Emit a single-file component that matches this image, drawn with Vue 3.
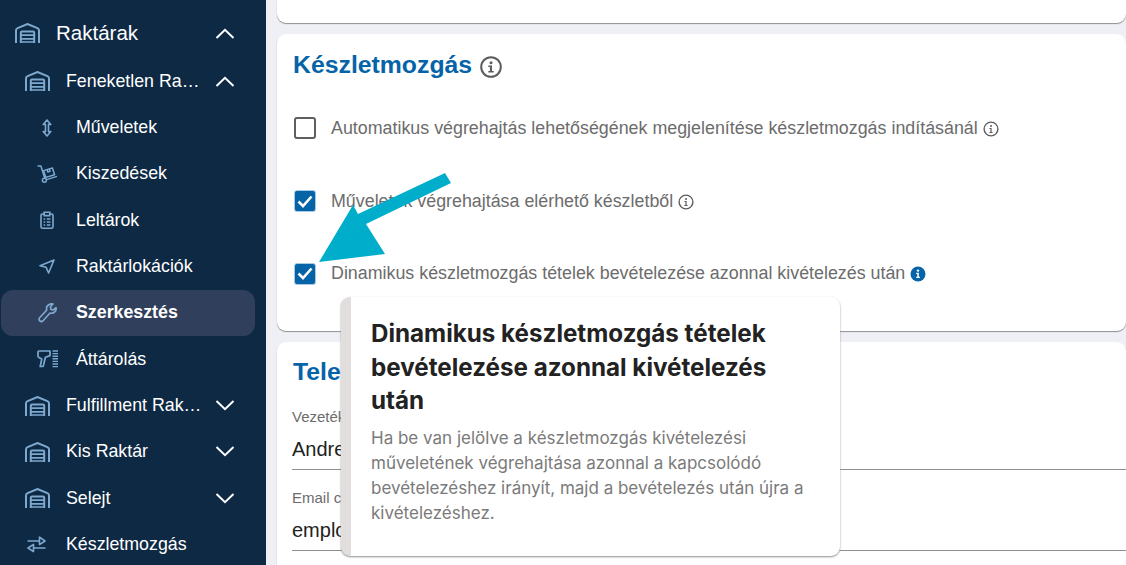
<script setup>
const navItems = [
  { label: 'Raktárak', level: 0, icon: 'warehouse', chevron: 'up' },
  { label: 'Feneketlen Raktár', level: 1, icon: 'warehouse', chevron: 'up' },
  { label: 'Műveletek', level: 2, icon: 'updown' },
  { label: 'Kiszedések', level: 2, icon: 'cart' },
  { label: 'Leltárok', level: 2, icon: 'clipboard' },
  { label: 'Raktárlokációk', level: 2, icon: 'nav' },
  { label: 'Szerkesztés', level: 2, icon: 'wrench', active: true },
  { label: 'Áttárolás', level: 2, icon: 'scanner' },
  { label: 'Fulfillment Raktár', level: 1, icon: 'warehouse', chevron: 'down' },
  { label: 'Kis Raktár', level: 1, icon: 'warehouse', chevron: 'down' },
  { label: 'Selejt', level: 1, icon: 'warehouse', chevron: 'down' },
  { label: 'Készletmozgás', level: 1, icon: 'transfer' }
]

const options = [
  { label: 'Automatikus végrehajtás lehetőségének megjelenítése készletmozgás indításánál', checked: false },
  { label: 'Műveletek végrehajtása elérhető készletből', checked: true },
  { label: 'Dinamikus készletmozgás tételek bevételezése azonnal kivételezés után', checked: true, solid: true }
]

const fields = [
  { label: 'Vezetéknév', value: 'Andrea' },
  { label: 'Email cím', value: 'employee@example.com' }
]
</script>

<template>
  <div class="page">
    <aside class="sidebar">
      <div
        v-for="item in navItems"
        :key="item.label"
        class="nav-row"
        :class="['lvl' + item.level, { active: item.active }]"
      >
        <span class="nav-icon">
          <svg v-if="item.icon === 'warehouse'" width="25" height="20" viewBox="0 0 25 20" fill="none" stroke="#7ea9cf" stroke-width="2">
            <path d="M1 20V7.6C1 6.4 1.5 5.7 2.6 5.2L12.5 1l9.9 4.2c1.1.5 1.6 1.2 1.6 2.4V20" />
            <path d="M5.8 20V9.8c0-.8.4-1.2 1.2-1.2h11c.8 0 1.2.4 1.2 1.2V20" />
            <path d="M5.8 12.2h13.4M5.8 15.8h13.4M5.8 19h13.4" stroke-width="1.7" />
          </svg>
          <svg v-else-if="item.icon === 'updown'" width="10" height="18" viewBox="0 0 10 18" fill="none" stroke="#7ea9cf" stroke-width="1.6" stroke-linejoin="round">
            <path d="M5 1 1.2 5.4h2.3v7.2H1.2L5 17l3.8-4.4H6.5V5.4h2.3z" />
          </svg>
          <svg v-else-if="item.icon === 'cart'" width="21" height="18" viewBox="0 0 21 18" fill="none" stroke="#7ea9cf" stroke-width="1.5" stroke-linejoin="round">
            <path d="M.5 1h3.4l3.8 12" />
            <path d="M6.6 5.6 15.4 3l2.2 6.8-8.8 2.6z" />
            <path d="M10 4.6l.8 2.4 2.2-.7-.8-2.4" />
            <path d="M9.5 14.6 20 11.4" />
            <circle cx="7.4" cy="15.2" r="2" />
          </svg>
          <svg v-else-if="item.icon === 'clipboard'" width="14" height="18" viewBox="0 0 14 18" fill="none" stroke="#7ea9cf" stroke-width="1.6">
            <path d="M4 3H2.5C1.6 3 1 3.6 1 4.5v11.2c0 .9.6 1.5 1.5 1.5h9c.9 0 1.5-.6 1.5-1.5V4.5C13 3.6 12.4 3 11.5 3H10" />
            <path d="M4.2 1.2h5.6v3.4H4.2z" />
            <path d="M3.6 8h1.6M6.8 8h3.6M3.6 11h1.6M6.8 11h3.6M3.6 14h1.6M6.8 14h3.6" stroke-width="1.3" />
          </svg>
          <svg v-else-if="item.icon === 'nav'" width="16" height="15" viewBox="0 0 16 15" fill="none" stroke="#7ea9cf" stroke-width="1.6" stroke-linejoin="round">
            <path d="M15 1 1 6.8l6 1.4L9.6 14z" />
          </svg>
          <svg v-else-if="item.icon === 'wrench'" width="19" height="20" viewBox="0 0 19 20" fill="none" stroke="#7ea9cf" stroke-width="1.7" stroke-linejoin="round">
            <path d="M18 4.6c.4 2.4-.6 4.4-2.8 5.3-1.3.5-2.3.4-3.2.1l-6.9 7.7c-1 1-2.4 1-3.3.1-1-.9-1-2.3 0-3.3l7-7.5c-.5-1.3-.4-2.5.3-3.8C11.1 1.1 13.2.4 15 1l-2.6 3 .5 2.4 2.4.6z" />
          </svg>
          <svg v-else-if="item.icon === 'scanner'" width="21" height="18" viewBox="0 0 21 18" fill="none" stroke="#7ea9cf" stroke-width="1.7" stroke-linejoin="round">
            <path d="M2 1h11v4.6L8.4 7.2 6.4 15.6c-.1.6-.5.9-1 .9H3.2L4.8 9 2 7.6c-.7-.4-1-.9-1-1.6V2c0-.6.4-1 1-1z" />
            <path d="M15.5 1H21M15.5 3.600H21M15.5 6.2H21M15.5 8.8H21M15.5 11.4H21M15.5 14H21M15.5 16.6H21" stroke-width="1.4" />
          </svg>
          <svg v-else-if="item.icon === 'transfer'" class="transfer-icon" width="19" height="17" viewBox="0 0 19 17" fill="none" stroke="#7ea9cf" stroke-width="1.6" stroke-linejoin="round">
            <path d="M.5 5h12M12.5 1.2v7.4L18 5zM18.5 12h-12M6.5 8.4v7.2L1 12z" />
          </svg>
        </span>
        <span class="nav-label">{{ item.label }}</span>
        <svg v-if="item.chevron" class="chevron" width="20" height="11" viewBox="0 0 20 11" fill="none" stroke="#fff" stroke-width="2">
          <path v-if="item.chevron === 'up'" d="M1.5 10 10 1.8 18.5 10" />
          <path v-else d="M1.5 1 10 9.2 18.5 1" />
        </svg>
      </div>
    </aside>

    <main class="content">
      <section class="card card-top"></section>

      <section class="card card-stock">
        <h2 class="title">
          Készletmozgás
          <svg class="title-info" width="22" height="22" viewBox="0 0 22 22" fill="none">
            <circle cx="11" cy="11" r="9.8" stroke="#5c5c5c" stroke-width="2" />
            <circle cx="11" cy="6.7" r="1.5" fill="#5c5c5c" />
            <path d="M8.3 9.4H12V15h1.700v1.600H8.300V15h1.600v-4H8.300z" fill="#5c5c5c" />
          </svg>
        </h2>
        <div class="options">
          <div v-for="opt in options" :key="opt.label" class="option">
            <span class="box" :class="{ checked: opt.checked }">
              <svg v-if="opt.checked" width="16" height="13" viewBox="0 0 16 13" fill="none" stroke="#fff" stroke-width="2.6">
                <path d="M1.5 6.5 6 11l8.500-9.500" />
              </svg>
            </span>
            <span class="opt-label">{{ opt.label }}</span>
            <svg class="opt-info" width="16" height="16" viewBox="0 0 16 16" fill="none">
              <template v-if="opt.solid">
                <circle cx="8" cy="8" r="7.5" fill="#0563a8" />
                <circle cx="8" cy="4.6" r="1.2" fill="#fff" />
                <path d="M6.2 6.8h2.600v4h1.100v1.300H6.200v-1.300h1.100V8.100H6.200z" fill="#fff" />
              </template>
              <template v-else>
                <circle cx="8" cy="8" r="6.9" stroke="#5c5c5c" stroke-width="1.4" />
                <circle cx="8" cy="4.9" r="1" fill="#5c5c5c" />
                <path d="M6.4 7h2.200v3.900h1v1H6.400v-1h1V8H6.400z" fill="#5c5c5c" />
              </template>
            </svg>
          </div>
        </div>
      </section>

      <section class="card card-contact">
        <h2 class="title contact-title">Telephely</h2>
        <div v-for="f in fields" :key="f.label" class="field">
          <label class="field-label">{{ f.label }}</label>
          <div class="field-value">{{ f.value }}</div>
        </div>
      </section>
    </main>

    <svg class="arrow" width="140" height="100" viewBox="0 0 140 100">
      <path d="M134 3 140 13 55 54 74 84 8 92 42 35 47 44z" fill="#00aecb" />
    </svg>

    <div class="tooltip">
      <h3 class="tip-title">Dinamikus készletmozgás tételek bevételezése azonnal kivételezés után</h3>
      <p class="tip-body">Ha be van jelölve a készletmozgás kivételezési műveletének végrehajtása azonnal a kapcsolódó bevételezéshez irányít, majd a bevételezés után újra a kivételezéshez.</p>
    </div>
  </div>
</template>

<style>
html, body { margin: 0; padding: 0; overflow: hidden; }
</style>

<style scoped>
.page {
  position: relative;
  display: flex;
  width: 1126px;
  height: 565px;
  overflow: hidden;
  background: #eef0f6;
  font-family: "Liberation Sans", Arial, sans-serif;
}
.sidebar {
  width: 266px;
  flex: none;
  box-sizing: border-box;
  padding-top: 8px;
  background: #0e2944;
  color: #fff;
}
.nav-row {
  display: flex;
  align-items: center;
  box-sizing: border-box;
  height: 46.35px;
  width: 254px;
  margin-left: 1px;
  padding-right: 20px;
  border-radius: 12px;
  font-size: 17.8px;
}
.nav-row.lvl0 { height: 50px; padding-left: 13px; font-size: 20.5px; }
.nav-row.lvl1 { padding-left: 23px; }
.nav-row.lvl2 { padding-left: 33px; }
.nav-row.active { background: #303f5c; font-weight: 700; }
.nav-icon {
  flex: none;
  display: flex;
  align-items: center;
  justify-content: center;
  width: 26px;
  margin-right: 16px;
}
.nav-row.lvl2 .nav-icon { width: 24px; margin-left: 1px; margin-right: 17px; }
.transfer-icon { margin-left: -2px; }
.nav-label {
  width: 137px;
  white-space: nowrap;
  overflow: hidden;
  text-overflow: ellipsis;
}
.chevron { margin-left: auto; flex: none; }

.content {
  flex: 1;
  min-width: 0;
  padding-left: 11px;
}
.card {
  background: #fff;
  border-radius: 9px;
  box-shadow: 0 1px 1px #8f8f8f;
  margin-bottom: 11px;
}
.card-top {
  height: 23px;
  border-radius: 0 0 9px 9px;
}
.card-stock {
  height: 297px;
  box-sizing: border-box;
  padding: 16px 0 0 16px;
}
.card-contact {
  height: 240px;
  box-sizing: border-box;
  padding: 15px 0 0 15px;
}
.title {
  display: flex;
  align-items: center;
  gap: 8px;
  margin: 0;
  height: 30px;
  font-size: 24.8px;
  line-height: 30px;
  font-weight: 700;
  color: #0563a8;
}
.contact-title { padding-left: 1px; }
.title-info { margin-top: 3px; }
.options {
  display: flex;
  flex-direction: column;
  margin-top: 12px;
}
.option {
  display: flex;
  align-items: center;
  height: 72.7px;
  font-size: 17.85px;
  color: #6c6c6c;
}
.opt-label { white-space: nowrap; }
.opt-info { margin-left: 5px; margin-top: 1px; flex: none; }
.box {
  flex: none;
  display: flex;
  align-items: center;
  justify-content: center;
  box-sizing: border-box;
  width: 22px;
  height: 22px;
  margin-right: 15px;
  margin-left: 1px;
  border: 2.5px solid #5f5f5f;
  border-radius: 3px;
  background: #fff;
}
.box.checked {
  background: #0563a8;
  border: 1px solid #a9c8e2;
}
.field { margin-top: 17.5px; }
.contact-title + .field { margin-top: 20px; }
.field-label { display: block; font-size: 15px; line-height: 20px; color: #6c6c6c; }
.field-value {
  margin-top: 5px;
  font-size: 20px;
  line-height: 34px;
  padding-bottom: 3px;
  color: #222;
  border-bottom: 1px solid #8f8f8f;
}

.arrow {
  position: absolute;
  left: 311px;
  top: 170px;
  pointer-events: none;
}
.tooltip {
  position: absolute;
  left: 341px;
  top: 297px;
  width: 499px;
  height: 259px;
  box-sizing: border-box;
  padding: 20px 20px 0 20px;
  border-left: 10px solid #e2dede;
  border-radius: 9px;
  background: #fff;
  box-shadow: 0 1px 2px #8f8f8f;
  font-family: Inter, "Liberation Sans", sans-serif;
}
.tip-title {
  margin: 0;
  font-size: 24.2px;
  line-height: 33.5px;
  font-weight: 700;
  color: #222;
}
.tip-body {
  margin: 8px 0 0;
  font-size: 17px;
  line-height: 25px;
  color: #7a7a7a;
}
</style>
